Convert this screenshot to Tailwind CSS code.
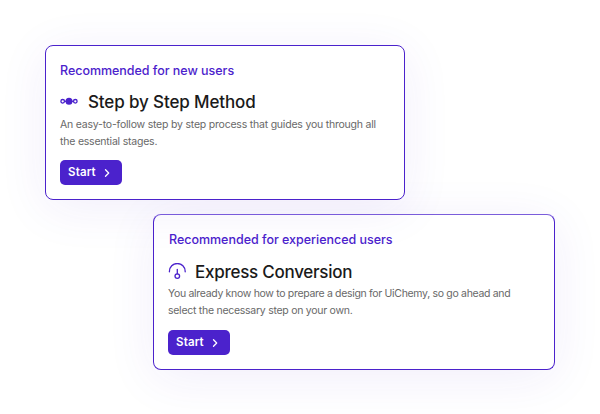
<!DOCTYPE html>
<html lang="en">
<head>
    <meta charset="UTF-8">
    <meta name="viewport" content="width=device-width, initial-scale=1.0">
    <title>Choose Method</title>
    <script src="https://cdn.jsdelivr.net/npm/@tailwindcss/browser@4"></script>
</head>
<body class="bg-white h-screen overflow-hidden font-['Inter','Open_Sans',sans-serif]">
    <main class="flex flex-col items-start pt-[45px] pl-[45px] gap-3.5">
        <section class="relative z-10 w-[359.5px] h-[155px] shrink-0 bg-white border border-[#4b22cc] rounded-lg pl-3.5 pt-4 shadow-[0_8px_50px_rgba(75,34,204,0.08)]">
            <p class="text-[12.5px] leading-[18px] font-medium text-[#4b22cc] tracking-[-0.03px] whitespace-nowrap">Recommended for new users</p>
            <div class="flex items-center gap-2.5 mt-2.5 h-6">
                <svg class="w-[18px] h-[18px] shrink-0" viewBox="0 0 18 18" fill="none" stroke="#4b22cc" stroke-width="1.3">
                    <circle cx="2.7" cy="8.3" r="1.8" />
                    <circle cx="15.3" cy="8.3" r="1.8" />
                    <path d="M4.5 8.3h9" />
                    <circle cx="9" cy="8.3" r="3.5" fill="#4b22cc" stroke="none" />
                </svg>
                <h2 class="text-[17px] leading-6 font-medium text-[#1a1a1a] tracking-[-0.13px] whitespace-nowrap">Step by Step Method</h2>
            </div>
            <p class="mt-[3px] text-[10.5px] leading-[16.5px] text-[#686868] tracking-[-0.21px] whitespace-nowrap">An easy-to-follow step by step process that guides you through all<br>the essential stages.</p>
            <button class="flex items-center gap-1.5 mt-2.5 w-[61.5px] h-[25px] pl-2 rounded-[5px] bg-[#4b22cc] text-white text-[11.5px] font-semibold tracking-[0.15px]">
                Start
                <svg class="w-2.5 h-2.5" viewBox="0 0 10 10" fill="none" stroke="currentColor" stroke-width="1.3" stroke-linecap="round" stroke-linejoin="round"><path d="M3.5 1.8 6.7 5 3.5 8.2" /></svg>
            </button>
        </section>

        <section class="ml-[108px] w-[402px] h-[156px] shrink-0 bg-white border border-[#4b22cc] border-t-[#7b5ddb] rounded-lg pl-3.5 pt-4 shadow-[0_8px_50px_rgba(75,34,204,0.08)]">
            <p class="pl-px text-[12.5px] leading-[18px] font-medium text-[#4b22cc] tracking-[-0.02px] whitespace-nowrap">Recommended for experienced users</p>
            <div class="flex items-center gap-[9px] mt-[11px] h-6">
                <svg class="w-[18px] h-[18px] shrink-0" viewBox="0 0 18 18" fill="none" stroke="#4b22cc" stroke-width="1.3" stroke-linecap="round">
                    <path d="M1.4 8.8V8.4a7.9 7.9 0 0 1 15.8 0v.4" />
                    <path d="M9.3 6.5v4.3" />
                    <circle cx="9.3" cy="13.1" r="2.3" />
                </svg>
                <h2 class="text-[17px] leading-6 font-medium text-[#1a1a1a] tracking-[-0.26px] whitespace-nowrap">Express Conversion</h2>
            </div>
            <p class="mt-0.5 text-[10.5px] leading-[16.5px] text-[#686868] tracking-[-0.32px] whitespace-nowrap">You already know how to prepare a design for UiChemy, so go ahead and<br><span class="tracking-[-0.27px]">select the necessary step on your own.</span></p>
            <button class="flex items-center gap-1.5 mt-[11px] w-[61.5px] h-[25px] pl-2 rounded-[5px] bg-[#4b22cc] text-white text-[11.5px] font-semibold tracking-[0.15px]">
                Start
                <svg class="w-2.5 h-2.5" viewBox="0 0 10 10" fill="none" stroke="currentColor" stroke-width="1.3" stroke-linecap="round" stroke-linejoin="round"><path d="M3.5 1.8 6.7 5 3.5 8.2" /></svg>
            </button>
        </section>
    </main>
</body>
</html>
